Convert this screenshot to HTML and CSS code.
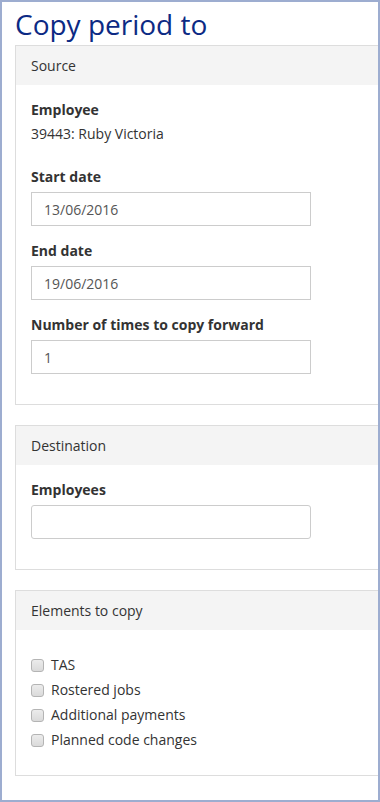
FILE: index.html
```html
<!DOCTYPE html>
<html lang="en">
<head>
    <meta charset="UTF-8">
    <meta name="viewport" content="width=device-width, initial-scale=1.0">
    <title>Copy period to</title>
    <link rel="stylesheet" href="styles.css">
</head>
<body>
    <div class="window">
        <h1 class="page-title">Copy period to</h1>

        <div class="panel">
            <div class="panel-heading">Source</div>
            <div class="panel-body">
                <div class="form-group">
                    <label class="field-label">Employee</label>
                    <div class="static-value">39443: Ruby Victoria</div>
                </div>
                <div class="form-group">
                    <label class="field-label">Start date</label>
                    <input class="form-control" type="text" value="13/06/2016">
                </div>
                <div class="form-group">
                    <label class="field-label">End date</label>
                    <input class="form-control" type="text" value="19/06/2016">
                </div>
                <div class="form-group">
                    <label class="field-label">Number of times to copy forward</label>
                    <input class="form-control" type="text" value="1">
                </div>
            </div>
        </div>

        <div class="panel">
            <div class="panel-heading">Destination</div>
            <div class="panel-body">
                <div class="form-group">
                    <label class="field-label">Employees</label>
                    <input class="form-control rounded" type="text" value="">
                </div>
            </div>
        </div>

        <div class="panel">
            <div class="panel-heading">Elements to copy</div>
            <div class="panel-body">
                <div class="check-list">
                    <label class="check-row"><input type="checkbox"> TAS</label>
                    <label class="check-row"><input type="checkbox"> Rostered jobs</label>
                    <label class="check-row"><input type="checkbox"> Additional payments</label>
                    <label class="check-row"><input type="checkbox"> Planned code changes</label>
                </div>
            </div>
        </div>
    </div>
</body>
</html>
```

FILE: styles.css
```css
body {
    margin: 0;
    padding: 0;
    font-family: "Open Sans", Arial, sans-serif;
    font-size: 14px;
    line-height: 20px;
    color: #333;
    background-color: #fff;
}
.window {
    box-sizing: border-box;
    width: 380px;
    height: 802px;
    border: 2px solid #9dadd0;
    padding-left: 13px;
    overflow: hidden;
}
.page-title {
    margin: 4px 0 3px;
    font-size: 28px;
    line-height: 36px;
    font-weight: normal;
    color: #0c2a84;
}
.panel {
    width: 600px;
    border: 1px solid #ddd;
    margin-bottom: 20px;
    background-color: #fff;
}
.panel-heading {
    background-color: #f4f4f4;
    padding: 10px 15px 9px;
    line-height: 20px;
}
.panel-body {
    padding: 15px;
}
.form-group {
    margin-bottom: 15px;
}
.field-label {
    display: block;
    font-weight: bold;
    margin-bottom: 5px;
}
.static-value {
    margin-top: -1px;
    padding-bottom: 8px;
}
.form-control {
    display: block;
    box-sizing: border-box;
    width: 280px;
    height: 34px;
    padding: 6px 12px;
    border: 1px solid #ccc;
    border-radius: 0;
    font-family: "Open Sans", Arial, sans-serif;
    font-size: 14px;
    color: #555;
    background-color: #fff;
}
.form-control.rounded {
    border-radius: 3px;
}
.check-list {
    padding: 10px 0 10px;
    display: flex;
    flex-direction: column;
    gap: 5px;
}
.check-row {
    display: flex;
    align-items: center;
    gap: 7px;
    color: #333;
}
.check-row input {
    appearance: none;
    -webkit-appearance: none;
    box-sizing: border-box;
    width: 13px;
    height: 13px;
    margin: 0;
    border: 1px solid #b4b4b4;
    border-radius: 3px;
    background: linear-gradient(#ececec, #dadada);
}
```
